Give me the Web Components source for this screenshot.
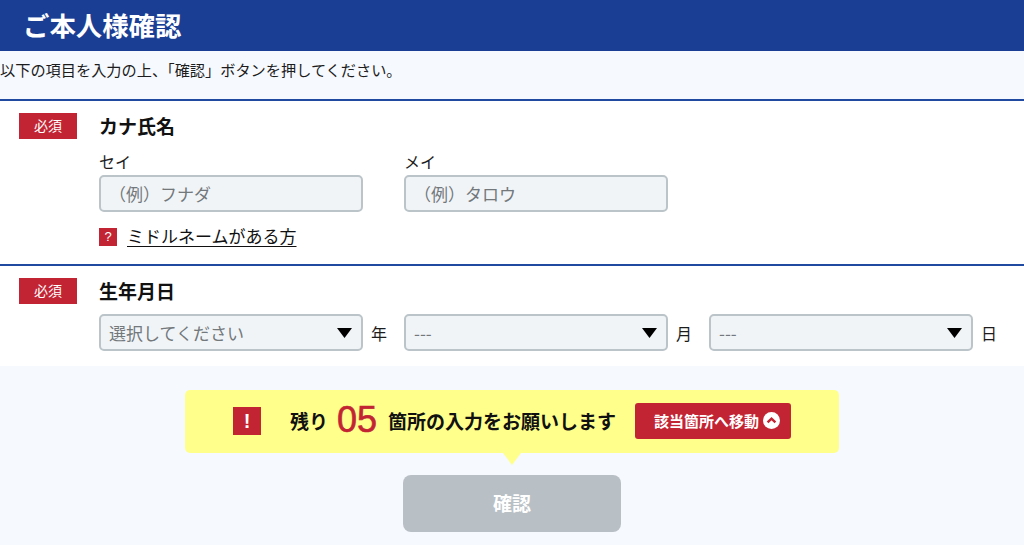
<!DOCTYPE html>
<html lang="ja">
<head>
<meta charset="utf-8">
<title>ご本人様確認</title>
<style>
html, body { margin: 0; padding: 0; }
body {
    background: #f6f9fe;
    color: #111;
    font-family: "Noto Sans CJK JP", "Liberation Sans", sans-serif;
    overflow: hidden;
}
</style>
</head>
<body>
<page-header>ご本人様確認</page-header>
<page-lead>以下の項目を入力の上、「確認」ボタンを押してください。</page-lead>

<form-section label="カナ氏名" pad="12" end="18">
    <div style="display:flex;gap:41px">
        <name-field label="セイ" placeholder="（例）フナダ"></name-field>
        <name-field label="メイ" placeholder="（例）タロウ"></name-field>
    </div>
    <help-link>ミドルネームがある方</help-link>
</form-section>

<form-section label="生年月日" pad="12" end="15" compact>
    <div style="display:flex;gap:17px">
        <date-select value="選択してください" unit="年"></date-select>
        <date-select value="---" unit="月"></date-select>
        <date-select value="---" unit="日"></date-select>
    </div>
</form-section>

<remain-notice count="05"></remain-notice>
<submit-button>確認</submit-button>

<script>
class PageHeader extends HTMLElement {
    constructor() {
        super()
        this.attachShadow({ mode: "open" })
        this.shadowRoot.innerHTML = `
            <style>
            :host {
                display: flex;
                align-items: center;
                height: 51px;
                padding: 0 0 3px 23px;
                background: #1a3e94;
                color: #fff;
                font-size: 26.4px;
                font-weight: 700;
                box-sizing: border-box;
            }
            </style>
            <slot></slot>`
    }
}
customElements.define("page-header", PageHeader)

class PageLead extends HTMLElement {
    constructor() {
        super()
        this.attachShadow({ mode: "open" })
        this.shadowRoot.innerHTML = `
            <style>
            :host {
                display: block;
                height: 48px;
                padding-top: 8px;
                box-sizing: border-box;
                font-size: 15.2px;
                line-height: 20px;
                color: #1c1c1c;
            }
            </style>
            <slot></slot>`
    }
}
customElements.define("page-lead", PageLead)

class FormSection extends HTMLElement {
    constructor() {
        super()
        this.attachShadow({ mode: "open" })
    }

    connectedCallback() {
        if (this.shadowRoot.children.length > 0) {
            return
        }
        const pad = this.getAttribute("pad")
        const end = this.getAttribute("end")
        this.shadowRoot.innerHTML = `
            <style>
            :host {
                display: block;
                background: #fff;
                border-top: 2px solid #1f4aa0;
                padding: ${pad}px 0 ${end}px 19px;
            }
            .row { display: flex; }
            .badge {
                width: 58px;
                height: 26px;
                background: #c32433;
                color: #fff;
                font-size: 14px;
                line-height: 25px;
                text-align: center;
                flex: none;
            }
            .body { margin-left: 22px; }
            .title {
                font-size: 19px;
                font-weight: 700;
                line-height: 26px;
                margin-bottom: 12px;
            }
            :host([compact]) .title { margin-bottom: 10px; }
            </style>
            <div class="row">
                <div class="badge">必須</div>
                <div class="body">
                    <div class="title">${this.getAttribute("label")}</div>
                    <slot></slot>
                </div>
            </div>`
    }
}
customElements.define("form-section", FormSection)

class NameField extends HTMLElement {
    constructor() {
        super()
        this.attachShadow({ mode: "open" })
    }

    connectedCallback() {
        if (this.shadowRoot.children.length > 0) {
            return
        }
        this.shadowRoot.innerHTML = `
            <style>
            :host { display: block; width: 264px; }
            .label { font-size: 16px; line-height: 20px; height: 24px; color: #1c1c1c; }
            .box {
                height: 37px;
                box-sizing: border-box;
                border: 2px solid #bbc4c9;
                border-radius: 5px;
                background: #f1f4f6;
                color: #72787c;
                font-size: 17px;
                line-height: 33px;
                padding-left: 8px;
            }
            </style>
            <div class="label">${this.getAttribute("label")}</div>
            <div class="box">${this.getAttribute("placeholder")}</div>`
    }
}
customElements.define("name-field", NameField)

class HelpLink extends HTMLElement {
    constructor() {
        super()
        this.attachShadow({ mode: "open" })
        this.shadowRoot.innerHTML = `
            <style>
            :host {
                display: flex;
                align-items: center;
                margin-top: 16px;
                height: 18px;
                font-size: 17px;
            }
            .mark {
                width: 18px;
                height: 18px;
                background: #c32433;
                color: #fff;
                font: 400 13px/18px "Liberation Sans", sans-serif;
                text-align: center;
                margin-right: 10px;
            }
            a {
                color: #111;
                text-decoration: underline;
                text-underline-offset: 3px;
                margin-top: -4px;
            }
            </style>
            <span class="mark">?</span>
            <a href="#"><slot></slot></a>`
    }
}
customElements.define("help-link", HelpLink)

class DateSelect extends HTMLElement {
    constructor() {
        super()
        this.attachShadow({ mode: "open" })
    }

    connectedCallback() {
        if (this.shadowRoot.children.length > 0) {
            return
        }
        this.shadowRoot.innerHTML = `
            <style>
            :host { display: flex; align-items: center; }
            .box {
                width: 264px;
                height: 37px;
                box-sizing: border-box;
                border: 2px solid #bbc4c9;
                border-radius: 5px;
                background: #f1f4f6;
                color: #72787c;
                font-size: 17px;
                line-height: 33px;
                padding: 0 9px 0 8px;
                display: flex;
                align-items: center;
                justify-content: space-between;
            }
            svg { display: block; flex: none; }
            .unit { width: 16px; margin-left: 8px; font-size: 16px; color: #1c1c1c; }
            </style>
            <div class="box">
                <span>${this.getAttribute("value")}</span>
                <svg width="15" height="10" viewBox="0 0 15 10"><path d="M0 0H15L7.5 10Z" fill="#000"/></svg>
            </div>
            <span class="unit">${this.getAttribute("unit")}</span>`
    }
}
customElements.define("date-select", DateSelect)

class RemainNotice extends HTMLElement {
    constructor() {
        super()
        this.attachShadow({ mode: "open" })
    }

    connectedCallback() {
        if (this.shadowRoot.children.length > 0) {
            return
        }
        this.shadowRoot.innerHTML = `
            <style>
            :host {
                display: flex;
                align-items: center;
                position: relative;
                width: 654px;
                height: 63px;
                margin: 24px auto 0;
                padding-left: 48px;
                box-sizing: border-box;
                background: #ffff8c;
                border-radius: 5px;
                font-size: 19px;
                font-weight: 700;
            }
            :host::after {
                content: "";
                position: absolute;
                left: 318px;
                top: 63px;
                border: 9px solid transparent;
                border-bottom: 0;
                border-top: 12px solid #ffff8c;
            }
            .alert {
                width: 28px;
                height: 28px;
                margin-bottom: 1px;
                background: #c32433;
                color: #fff;
                font: 700 20px/28px "Liberation Sans", sans-serif;
                text-align: center;
                margin-right: 29px;
            }
            .txt { padding-bottom: 3px; }
            .count {
                color: #c32433;
                font: 400 36px/1 "Liberation Sans", sans-serif;
                -webkit-text-stroke: 0.6px #c32433;
                margin: 0 11px 3px 9px;
            }
            .move {
                display: flex;
                align-items: center;
                width: 156px;
                height: 36px;
                box-sizing: border-box;
                padding: 0 0 1px 19px;
                margin: 0 0 1px 19px;
                background: #c32433;
                color: #fff;
                border-radius: 3px;
                font-size: 15px;
            }
            .move svg { margin-left: 4px; }
            </style>
            <span class="alert">!</span>
            <span class="txt">残り</span>
            <span class="count">${this.getAttribute("count")}</span>
            <span class="txt">箇所の入力をお願いします</span>
            <span class="move">該当箇所へ移動
                <svg width="17" height="17" viewBox="0 0 17 17"><circle cx="8.5" cy="8.5" r="8.5" fill="#fff"/><path d="M4.6 10.4L8.5 6.6L12.4 10.4" fill="none" stroke="#c32433" stroke-width="2.4"/></svg>
            </span>`
    }
}
customElements.define("remain-notice", RemainNotice)

class SubmitButton extends HTMLElement {
    constructor() {
        super()
        this.attachShadow({ mode: "open" })
        this.shadowRoot.innerHTML = `
            <style>
            :host {
                display: flex;
                align-items: center;
                justify-content: center;
                width: 218px;
                height: 57px;
                box-sizing: border-box;
                padding-bottom: 3px;
                margin: 22px auto 0;
                background: #b9c0c5;
                border-radius: 8px;
                color: #fff;
                font-size: 19px;
                font-weight: 700;
            }
            </style>
            <slot></slot>`
    }
}
customElements.define("submit-button", SubmitButton)
</script>
</body>
</html>
